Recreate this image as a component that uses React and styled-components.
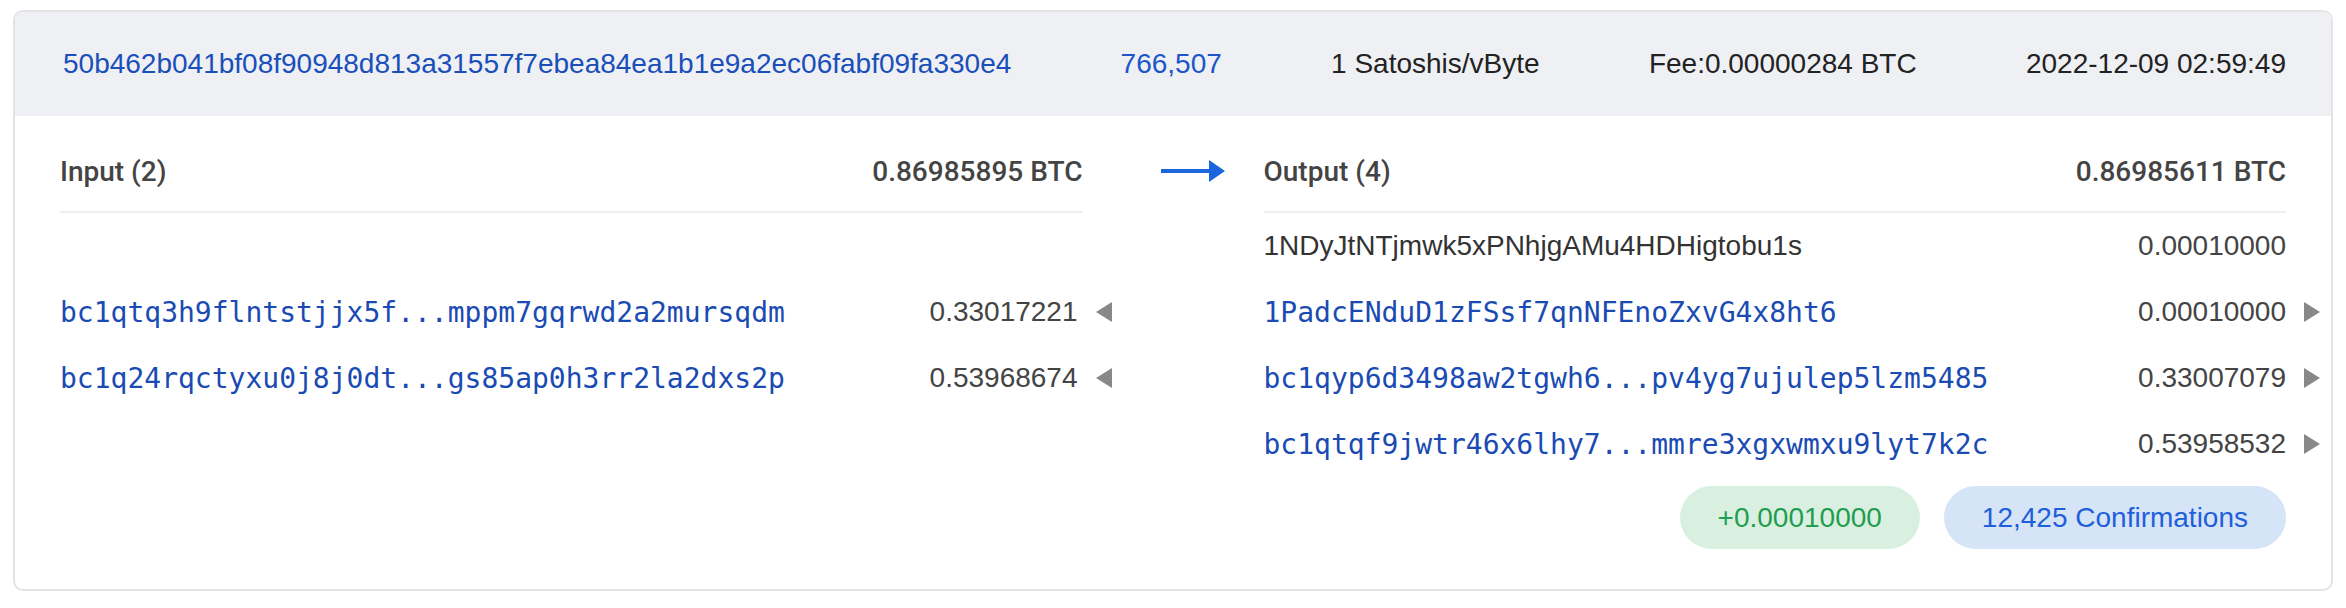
import styled, { createGlobalStyle } from "styled-components";

const GlobalStyle = createGlobalStyle`
body {
  margin: 10px 13px;
  background: #ffffff;
  font-family: "Liberation Sans", Arial, sans-serif;
}
`;

const Card = styled.div`
border: 2px solid #e4e4e4;
border-radius: 10px;
overflow: hidden;
background: #ffffff;
`;

const Header = styled.div`
display: flex;
justify-content: space-between;
align-items: center;
height: 104px;
padding: 0 45px 0 48px;
background: #eff0f4;
font-size: 28px;
color: #222222;
`;

const HeaderLink = styled.span`
color: ${(p) => (p.$bright ? "#1c56c9" : "#1a4fba")};
`;

const Body = styled.div`
display: grid;
grid-template-columns: 1fr 181px 1fr;
padding: 35px 45px 40px;
`;

const Title = styled.div`
display: flex;
justify-content: space-between;
align-items: center;
height: 40px;
padding-bottom: 20px;
border-bottom: 2px solid #eeeff3;
font-family: Roboto, "Liberation Sans", Arial, sans-serif;
font-weight: 500;
font-size: 28px;
color: #444444;
`;

const ArrowCell = styled.div`
display: flex;
align-items: center;
height: 40px;
padding-left: 78px;
`;

const List = styled.div`
display: flex;
flex-direction: column;
align-self: ${(p) => (p.$center ? "center" : "start")};
padding-right: ${(p) => (p.$center ? "5px" : "0")};
`;

const Row = styled.div`
display: flex;
justify-content: space-between;
align-items: center;
height: 66px;
font-size: 28px;
`;

const Address = styled.span`
font-family: ${(p) => (p.$plain ? '"Liberation Sans", Arial, sans-serif' : '"DejaVu Sans Mono", monospace')};
color: ${(p) => (p.$plain ? "#333333" : "#1a4bb3")};
`;

const AmountWrap = styled.div`
display: flex;
align-items: center;
`;

const Amount = styled.span`
color: #444444;
`;

const Caret = styled.span`
width: 0;
height: 0;
margin-left: 18px;
margin-right: -34px;
border-top: 10px solid transparent;
border-bottom: 10px solid transparent;
${(p) => (p.$dir === "left" ? "border-right: 16px solid #888888;" : "border-left: 16px solid #888888;")}
`;

const Badges = styled.div`
grid-column: 3;
display: flex;
justify-content: flex-end;
gap: 24px;
margin-top: 9px;
`;

const Badge = styled.span`
display: flex;
align-items: center;
height: 63px;
padding: 0 38px;
border-radius: 32px;
font-size: 28px;
background: ${(p) => (p.$tone === "green" ? "#d9f0e1" : "#d6e4f8")};
color: ${(p) => (p.$tone === "green" ? "#1e9e4e" : "#1f5fd9")};
`;

const inputs = [
  { addr: "bc1qtq3h9flntstjjx5f...mppm7gqrwd2a2mursqdm", value: "0.33017221" },
  { addr: "bc1q24rqctyxu0j8j0dt...gs85ap0h3rr2la2dxs2p", value: "0.53968674" },
];

const outputs = [
  { addr: "1NDyJtNTjmwk5xPNhjgAMu4HDHigtobu1s", value: "0.00010000", self: true },
  { addr: "1PadcENduD1zFSsf7qnNFEnoZxvG4x8ht6", value: "0.00010000" },
  { addr: "bc1qyp6d3498aw2tgwh6...pv4yg7ujulep5lzm5485", value: "0.33007079" },
  { addr: "bc1qtqf9jwtr46x6lhy7...mmre3xgxwmxu9lyt7k2c", value: "0.53958532" },
];

function Arrow() {
  return (
    <svg width="64" height="22" viewBox="0 0 64 22">
      <line x1="0" y1="11" x2="50" y2="11" stroke="#1b66dc" strokeWidth="4" />
      <polygon points="48,0 64,11 48,22" fill="#1b66dc" />
    </svg>
  );
}

export default function App() {
  return (
    <>
      <GlobalStyle />
      <Card>
        <Header>
          <HeaderLink>50b462b041bf08f90948d813a31557f7ebea84ea1b1e9a2ec06fabf09fa330e4</HeaderLink>
          <HeaderLink $bright>766,507</HeaderLink>
          <span>1 Satoshis/vByte</span>
          <span>Fee:0.00000284 BTC</span>
          <span>2022-12-09 02:59:49</span>
        </Header>
        <Body>
          <Title>
            <span>Input (2)</span>
            <span>0.86985895 BTC</span>
          </Title>
          <ArrowCell>
            <Arrow />
          </ArrowCell>
          <Title>
            <span>Output (4)</span>
            <span>0.86985611 BTC</span>
          </Title>

          <List $center>
            {inputs.map((r) => (
              <Row key={r.addr}>
                <Address>{r.addr}</Address>
                <AmountWrap>
                  <Amount>{r.value}</Amount>
                  <Caret $dir="left" />
                </AmountWrap>
              </Row>
            ))}
          </List>
          <div />
          <List>
            {outputs.map((r) => (
              <Row key={r.addr}>
                <Address $plain={r.self}>{r.addr}</Address>
                <AmountWrap>
                  <Amount>{r.value}</Amount>
                  {!r.self && <Caret $dir="right" />}
                </AmountWrap>
              </Row>
            ))}
          </List>

          <Badges>
            <Badge $tone="green">+0.00010000</Badge>
            <Badge $tone="blue">12,425 Confirmations</Badge>
          </Badges>
        </Body>
      </Card>
    </>
  );
}
